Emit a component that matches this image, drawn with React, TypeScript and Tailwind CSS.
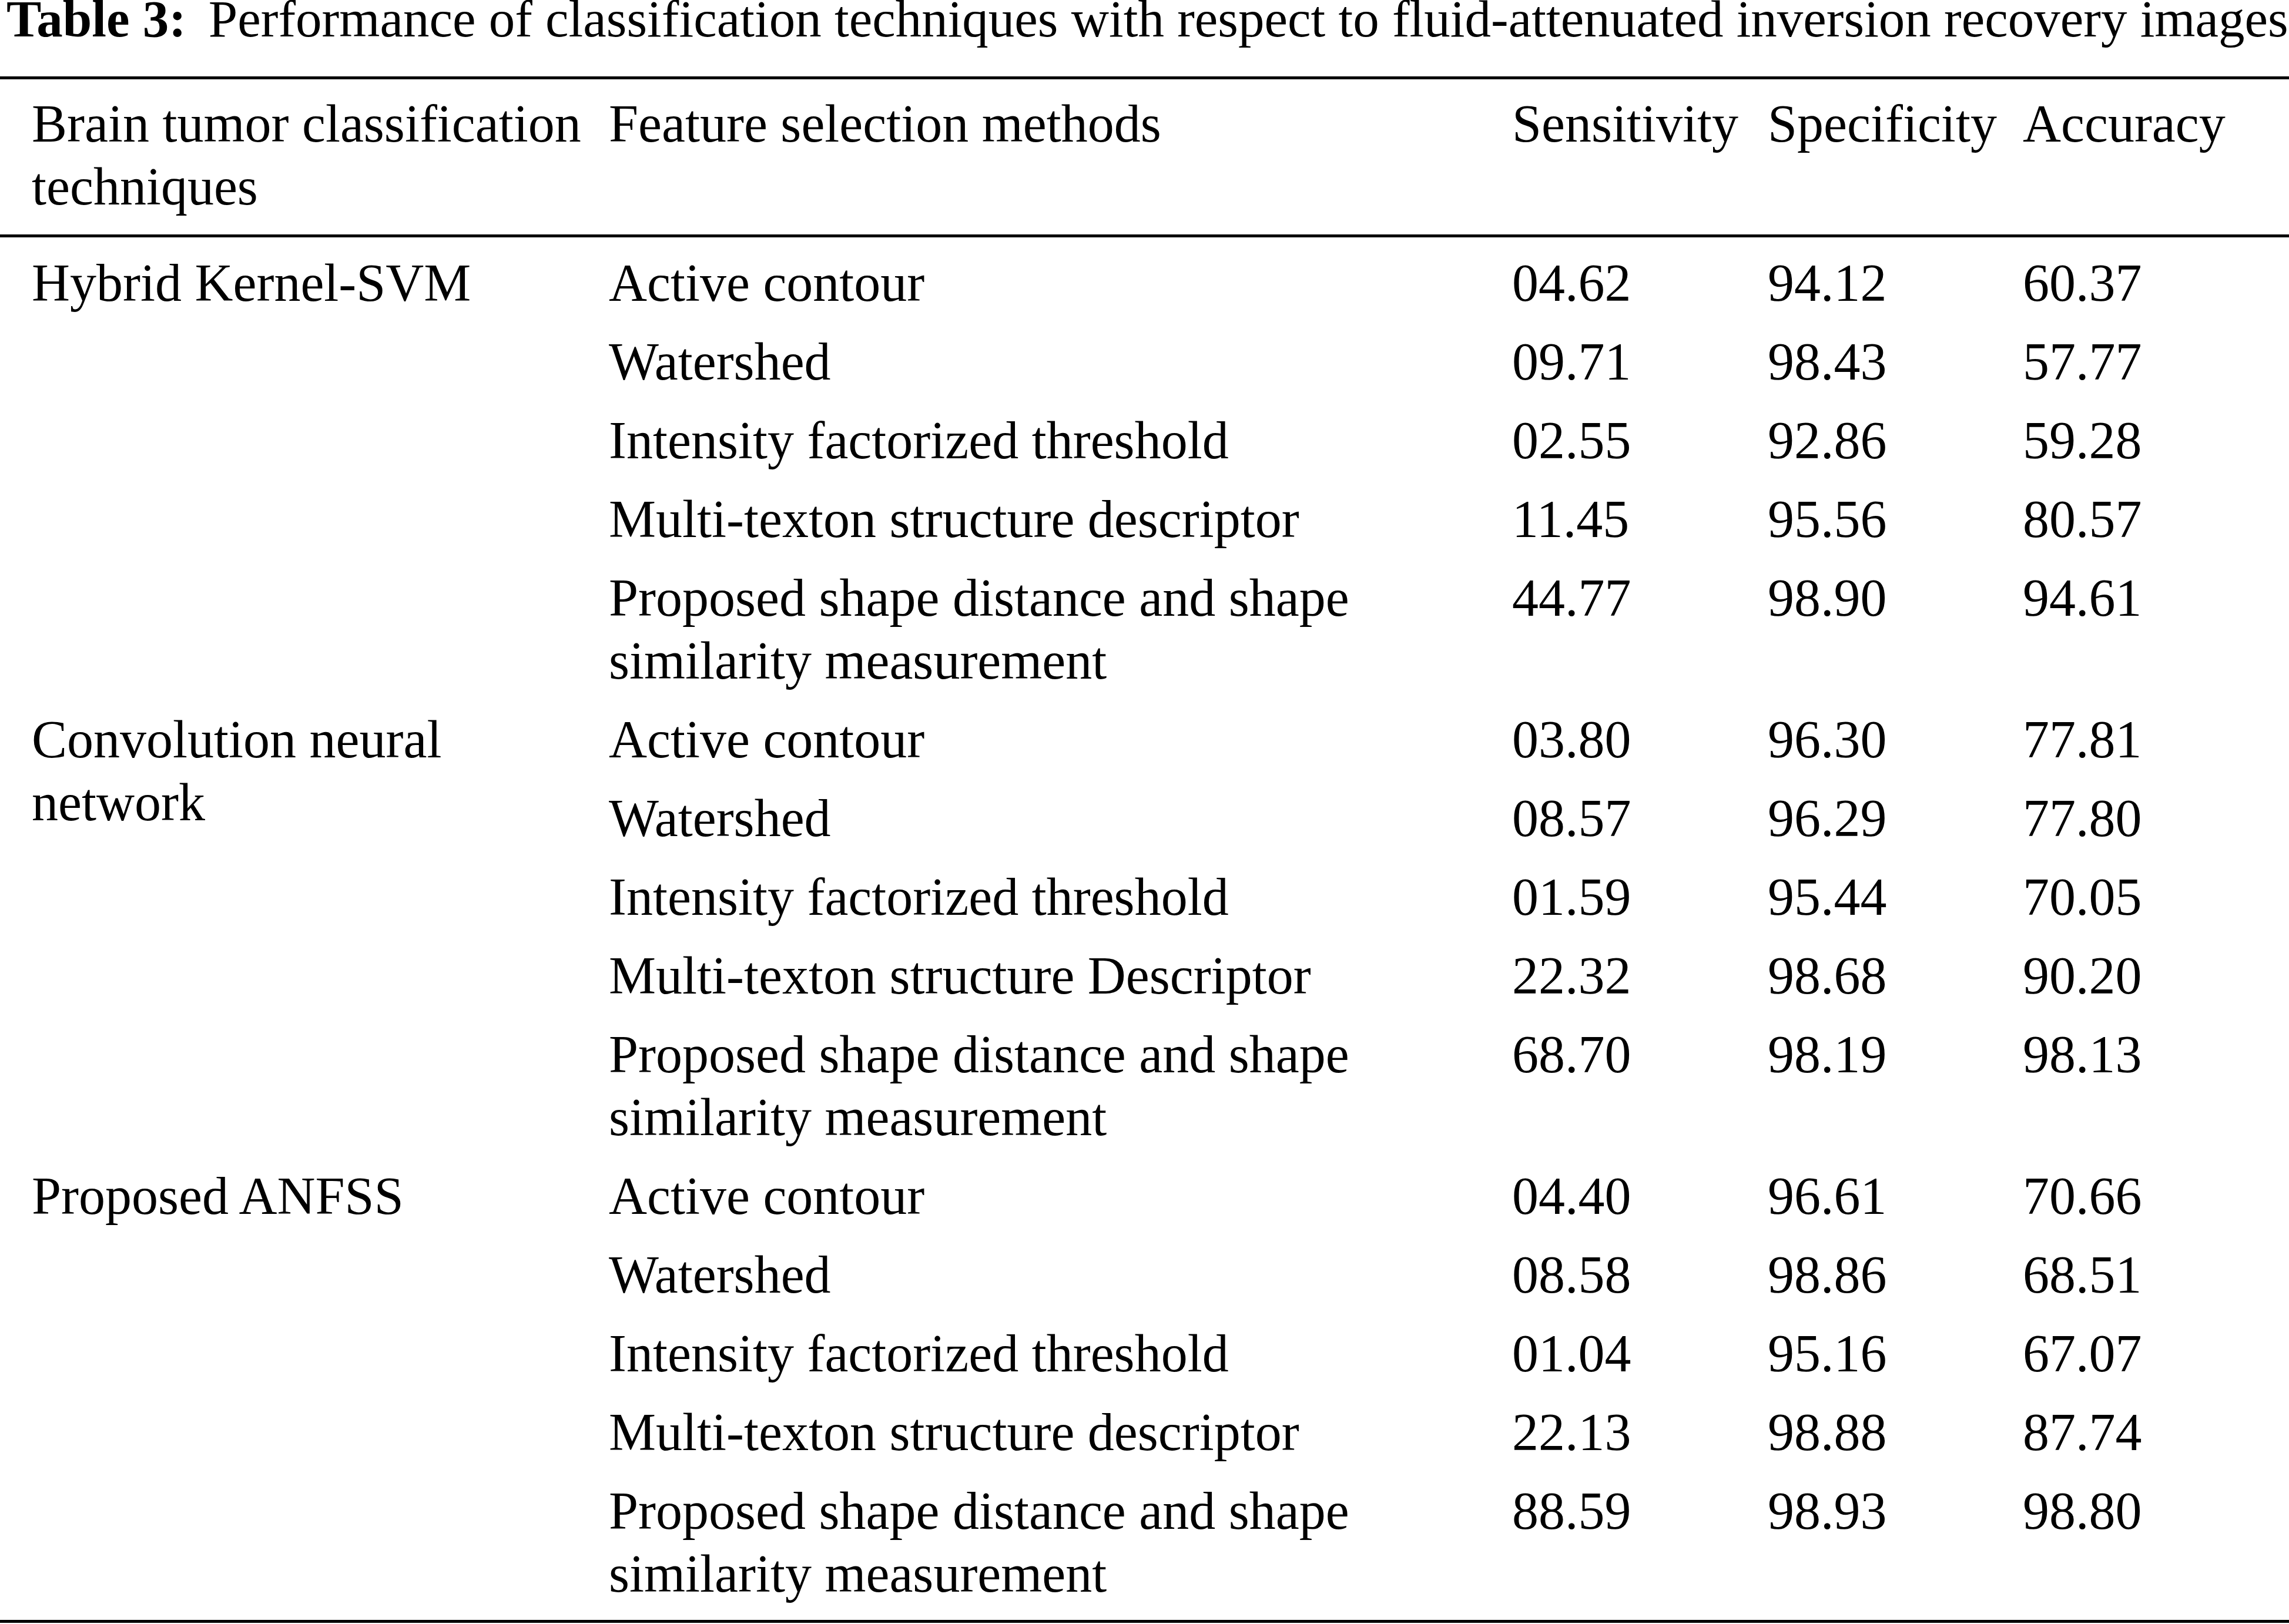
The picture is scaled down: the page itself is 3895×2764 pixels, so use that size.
import React from 'react';

type Row = {
  method: string;
  sensitivity: string;
  specificity: string;
  accuracy: string;
};

type Group = {
  technique: string;
  rows: Row[];
};

const groups: Group[] = [
  {
    technique: 'Hybrid Kernel-SVM',
    rows: [
      { method: 'Active contour', sensitivity: '04.62', specificity: '94.12', accuracy: '60.37' },
      { method: 'Watershed', sensitivity: '09.71', specificity: '98.43', accuracy: '57.77' },
      { method: 'Intensity factorized threshold', sensitivity: '02.55', specificity: '92.86', accuracy: '59.28' },
      { method: 'Multi-texton structure descriptor', sensitivity: '11.45', specificity: '95.56', accuracy: '80.57' },
      { method: 'Proposed shape distance and shape similarity measurement', sensitivity: '44.77', specificity: '98.90', accuracy: '94.61' },
    ],
  },
  {
    technique: 'Convolution neural network',
    rows: [
      { method: 'Active contour', sensitivity: '03.80', specificity: '96.30', accuracy: '77.81' },
      { method: 'Watershed', sensitivity: '08.57', specificity: '96.29', accuracy: '77.80' },
      { method: 'Intensity factorized threshold', sensitivity: '01.59', specificity: '95.44', accuracy: '70.05' },
      { method: 'Multi-texton structure Descriptor', sensitivity: '22.32', specificity: '98.68', accuracy: '90.20' },
      { method: 'Proposed shape distance and shape similarity measurement', sensitivity: '68.70', specificity: '98.19', accuracy: '98.13' },
    ],
  },
  {
    technique: 'Proposed ANFSS',
    rows: [
      { method: 'Active contour', sensitivity: '04.40', specificity: '96.61', accuracy: '70.66' },
      { method: 'Watershed', sensitivity: '08.58', specificity: '98.86', accuracy: '68.51' },
      { method: 'Intensity factorized threshold', sensitivity: '01.04', specificity: '95.16', accuracy: '67.07' },
      { method: 'Multi-texton structure descriptor', sensitivity: '22.13', specificity: '98.88', accuracy: '87.74' },
      { method: 'Proposed shape distance and shape similarity measurement', sensitivity: '88.59', specificity: '98.93', accuracy: '98.80' },
    ],
  },
];

const App: React.FC = () => {
  return (
    <div className="w-[3895px] h-[2764px] bg-white text-black font-['Liberation_Serif','Times_New_Roman',serif]">
      {/* Caption */}
      <div className="pl-[11px] h-[130px] text-[89px] leading-[65px] whitespace-nowrap">
        <span className="font-bold">Table 3:</span>
        <span className="ml-[38px]">
          Performance of classification techniques with respect to fluid-attenuated inversion recovery images
        </span>
      </div>

      <div className="h-[5px] bg-black" />

      {/* Header */}
      <div className="grid grid-cols-[982px_1537px_435px_434px_1fr] pl-[54px] pt-[22px] pb-[28px] text-[90px] leading-[107px]">
        <div>Brain tumor classification techniques</div>
        <div>Feature selection methods</div>
        <div>Sensitivity</div>
        <div>Specificity</div>
        <div>Accuracy</div>
      </div>

      <div className="h-[5px] bg-black" />

      {/* Body */}
      <div className="pb-[22px] text-[90px] leading-[107px]">
        {groups.map((g) => (
          <div key={g.technique} className="flex pl-[54px]">
            <div className="w-[982px] shrink-0 pt-[24px]">{g.technique}</div>
            <div className="flex-1">
              {g.rows.map((r, i) => (
                <div key={i} className="grid grid-cols-[1537px_435px_434px_1fr] pt-[24px] pb-[3px]">
                  <div>{r.method}</div>
                  <div>{r.sensitivity}</div>
                  <div>{r.specificity}</div>
                  <div>{r.accuracy}</div>
                </div>
              ))}
            </div>
          </div>
        ))}
      </div>

      <div className="h-[5px] bg-black" />
    </div>
  );
};

export default App;
